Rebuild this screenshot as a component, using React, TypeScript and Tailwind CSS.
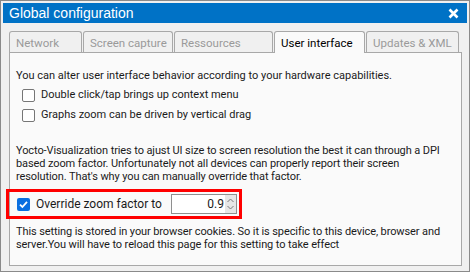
import React, { useState } from 'react';

const tabs = [
  { label: 'Network', width: 'w-[73px]' },
  { label: 'Screen capture', width: 'w-[90px]' },
  { label: 'Ressources', width: 'w-[99px]' },
  { label: 'User interface', width: 'w-[91px]', active: true },
  { label: 'Updates & XML', width: 'w-[93px]' },
];

const CheckBox = ({ checked }: { checked?: boolean }) =>
  checked ? (
    <span className="flex h-[13px] w-[13px] shrink-0 items-center justify-center rounded-[2px] bg-[#0a6fe0]">
      <svg width="11" height="11" viewBox="0 0 11 11">
        <path d="M2 5.6 L4.4 8 L9 2.8" fill="none" stroke="white" strokeWidth="1.8" />
      </svg>
    </span>
  ) : (
    <span className="h-[13px] w-[13px] shrink-0 rounded-[2px] border border-[#767676] bg-white" />
  );

export default function App() {
  const [zoom] = useState('0.9');

  return (
    <div className="flex h-[272px] w-[470px] flex-col border border-[#8a8a8a] bg-[#f0f0f0] p-[2px] font-['Roboto',Arial,sans-serif]">
      {/* title bar */}
      <div className="flex h-[20px] items-center justify-between bg-[#0072c6] pl-[6px] pr-[8px] text-white">
        <span className="font-['Liberation_Sans',Arial,sans-serif] text-[14px] leading-none">Global configuration</span>
        <svg width="11" height="11" viewBox="0 0 11 11">
          <path d="M1.5 1.5 L9.5 9.5 M9.5 1.5 L1.5 9.5" stroke="white" strokeWidth="2.6" />
        </svg>
      </div>

      {/* tabs */}
      <div className="ml-[6px] mt-[8px] flex gap-px">
        {tabs.map((t) => (
          <div
            key={t.label}
            className={`${t.width} relative h-[21px] whitespace-nowrap rounded-t-[3px] border border-b-0 border-[#a8a8a8] px-[6px] pt-[4px] text-[11.5px] leading-[14px] ${
              t.active ? 'z-10 -mb-px h-[22px] bg-[#fafafa] text-black' : 'bg-[#f0f0f0] text-[#9a9a9a]'
            }`}
          >
            {t.label}
          </div>
        ))}
      </div>

      {/* panel */}
      <div className="mb-[3px] ml-[6px] mr-[5px] flex-1 border border-[#a8a8a8] bg-[#fafafa] text-[11px] text-[#1a1a1a]">
        <p className="mt-[16px] pl-[6px] leading-[14px]">
          You can alter user interface behavior according to your hardware capabilities.
        </p>
        <div className="mt-[5px] flex flex-col gap-[6px] pl-[12px] leading-[14px]">
          <label className="flex items-center gap-[6px]">
            <CheckBox />
            Double click/tap brings up context menu
          </label>
          <label className="flex items-center gap-[6px]">
            <CheckBox />
            Graphs zoom can be driven by vertical drag
          </label>
        </div>
        <p className="mt-[22px] whitespace-nowrap pl-[6px] leading-[13px] tracking-[-0.1px]">
          Yocto-Visualization tries to ajust UI size to screen resolution the best it can through a DPI
          <br />
          based zoom factor. Unfortunately not all devices can properly report their screen
          <br />
          resolution. That's why you can manually override that factor.
        </p>
        <div className="-ml-[4px] mt-[6px] flex h-[30px] w-[236px] items-center border-[3px] border-[#ff0000] pl-[8px]">
          <CheckBox checked />
          <span className="ml-[6px] whitespace-nowrap text-[12px]">Override zoom factor to</span>
          <div className="ml-[9px] flex h-[20px] w-[66px] items-center border border-[#8f8f8f] bg-white">
            <span className="flex-1 pr-[1px] text-right text-[12px]">{zoom}</span>
            <div className="flex h-full w-[11px] flex-col items-center justify-center bg-[#e6e6e6]">
              <svg width="9" height="16" viewBox="0 0 9 16">
                <path d="M1.5 6 L4.5 3 L7.5 6 M1.5 10 L4.5 13 L7.5 10" fill="none" stroke="#7a7a7a" strokeWidth="1" />
              </svg>
            </div>
          </div>
        </div>
        <p className="mt-[6px] pl-[6px] pr-[6px] leading-[13px] tracking-[-0.1px]">
          This setting is stored in your browser cookies. So it is specific to this device, browser and server.You will
          have to reload this page for this setting to take effect
        </p>
      </div>
    </div>
  );
}
